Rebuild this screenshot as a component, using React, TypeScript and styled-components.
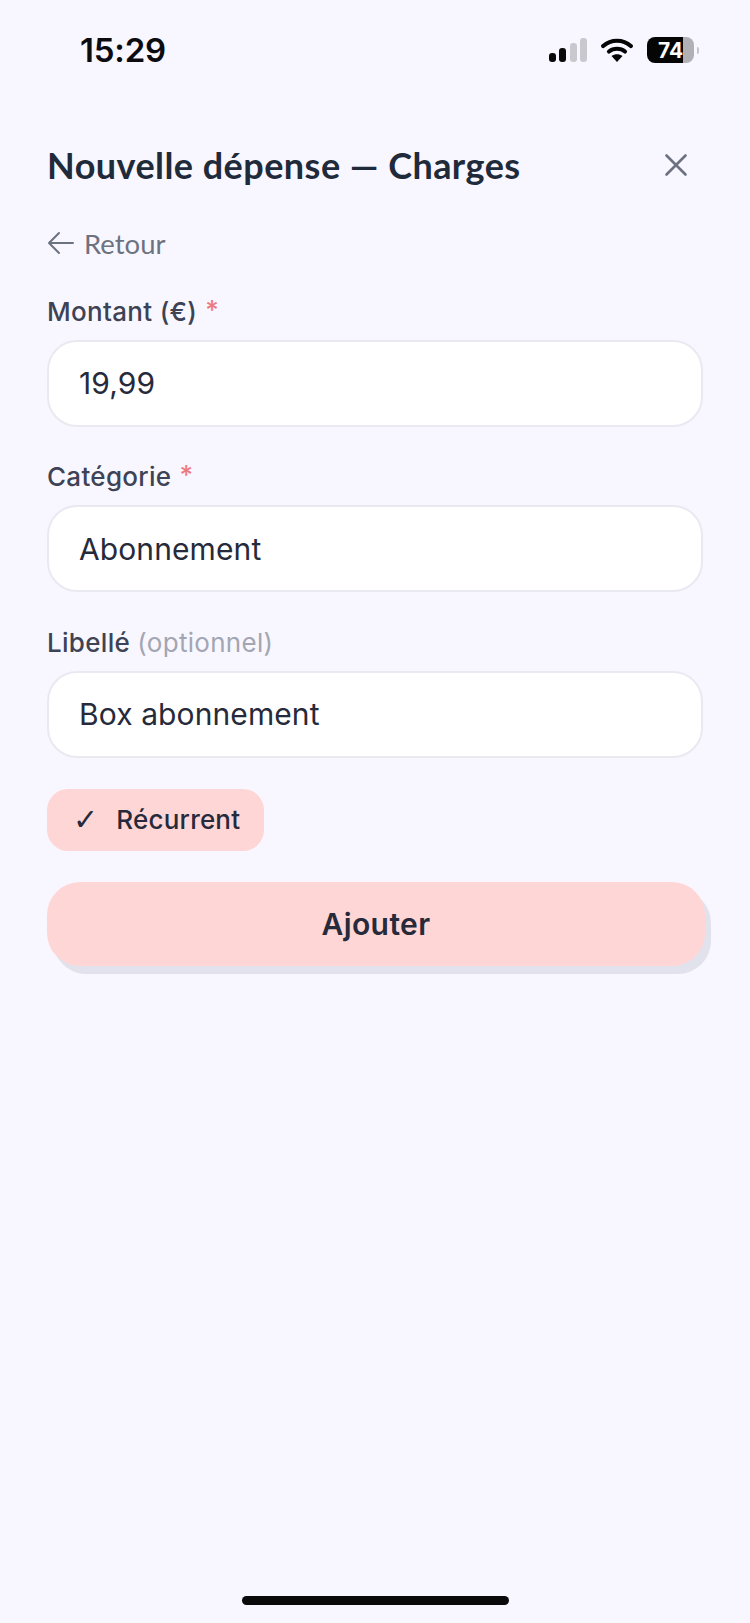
import React from 'react';
import styled, { createGlobalStyle } from 'styled-components';

const GlobalStyle = createGlobalStyle`
  html, body {
    margin: 0;
    padding: 0;
    background: #f8f7ff;
  }
  * {
    box-sizing: border-box;
  }
`;

const Page = styled.div`
  width: 750px;
  height: 1623px;
  display: flex;
  flex-direction: column;
  background: #f8f7ff;
  font-family: Inter, "Liberation Sans", sans-serif;
  color: #262a3a;
`;

const StatusBar = styled.div`
  height: 132px;
  padding: 30px 51px 0 80px;
  display: flex;
  align-items: flex-start;
  justify-content: space-between;
`;

const Clock = styled.div`
  font-size: 33px;
  line-height: 40px;
  font-weight: 600;
  color: #0c0c10;
  letter-spacing: -0.2px;
`;

const StatusIcons = styled.div`
  display: flex;
  align-items: center;
  gap: 14px;
  height: 40px;
`;

const Battery = styled.div`
  width: 47px;
  height: 26px;
  border-radius: 8px;
  display: flex;
  align-items: center;
  justify-content: center;
  color: #ffffff;
  font-size: 21px;
  font-weight: 700;
  background: linear-gradient(90deg, #050505 76%, #b0b0b6 76%);
`;

const BatteryCap = styled.div`
  width: 2px;
  height: 7px;
  margin-left: -11px;
  border-radius: 0 2px 2px 0;
  background: #c4c4ca;
`;

const Content = styled.div`
  padding: 0 47px;
  display: flex;
  flex-direction: column;
  flex: 1;
`;

const Header = styled.div`
  height: 66px;
  display: flex;
  align-items: center;
  justify-content: space-between;
  padding-right: 12px;
`;

const Title = styled.h1`
  margin: 0;
  font-family: Lato, sans-serif;
  font-size: 36px;
  font-weight: 700;
  letter-spacing: 0.45px;
  color: #1f2a3a;
`;

const CloseButton = styled.div`
  display: flex;
  color: #6b7180;
`;

const BackLink = styled.div`
  margin-top: 27px;
  height: 36px;
  display: flex;
  align-items: center;
  gap: 10px;
  font-family: Lato, sans-serif;
  font-size: 27.5px;
  color: #6d7280;
`;

const Field = styled.div`
  display: flex;
  flex-direction: column;
`;

const Label = styled.label`
  height: 36px;
  margin-top: 32px;
  display: flex;
  align-items: center;
  gap: 8px;
  font-size: 26px;
  font-weight: 500;
  letter-spacing: 0.3px;
  color: #3d4354;
`;

const Required = styled.span`
  color: #ee7a80;
  margin-top: -4px;
`;

const Hint = styled.span`
  color: #a3a6b2;
  font-weight: 400;
`;

const Input = styled.div`
  margin-top: 10.5px;
  height: 87px;
  border: 2px solid #e9e9f1;
  border-radius: 30px;
  background: #ffffff;
  padding: 0 30px;
  display: flex;
  align-items: center;
  font-size: 30px;
  letter-spacing: 0.1px;
  color: #262a3a;
`;

const Chip = styled.div`
  align-self: flex-start;
  margin-top: 31px;
  width: 217px;
  height: 62px;
  border-radius: 21px;
  background: #ffd6d6;
  padding-left: 26px;
  display: flex;
  align-items: center;
  gap: 18px;
  font-size: 26px;
  font-weight: 500;
  letter-spacing: 0.2px;
  color: #262a3a;
`;

const CheckMark = styled.span`
  font-family: "DejaVu Sans", sans-serif;
  font-size: 30px;
  font-weight: 700;
  line-height: 1;
`;

const Submit = styled.div`
  margin-top: 31px;
  height: 84px;
  width: 658px;
  border-radius: 33px;
  background: #ffd6d6;
  box-shadow: 6px 8px 0 #e2e2ec;
  display: flex;
  align-items: center;
  justify-content: center;
  font-size: 30px;
  font-weight: 600;
  letter-spacing: 0.4px;
  color: #262a3a;
`;

const HomeBar = styled.div`
  align-self: center;
  width: 267px;
  height: 9px;
  margin-bottom: 18px;
  border-radius: 5px;
  background: #0a0a0a;
`;

const fields = [
  { label: 'Montant (€)', required: true, value: '19,99' },
  { label: 'Catégorie', required: true, value: 'Abonnement' },
  { label: 'Libellé', hint: '(optionnel)', value: 'Box abonnement' },
];

const App = () => (
  <Page>
    <GlobalStyle />
    <StatusBar>
      <Clock>15:29</Clock>
      <StatusIcons>
        <svg width="38" height="24" viewBox="0 0 38 24">
          <rect x="0" y="15" width="7" height="9" rx="3" fill="#0a0a0a" />
          <rect x="10" y="10" width="7" height="14" rx="3" fill="#0a0a0a" />
          <rect x="21" y="5" width="7" height="19" rx="3" fill="#c8c8ce" />
          <rect x="31" y="0" width="7" height="24" rx="3" fill="#c8c8ce" />
        </svg>
        <svg width="32" height="24" viewBox="0 0 32 24">
          <path d="M2.2 8 C10 1 22 1 29.8 8" fill="none" stroke="#050505" strokeWidth="4.2" strokeLinecap="round" />
          <path d="M8 13.5 C12.5 9.8 19.5 9.8 24 13.5" fill="none" stroke="#050505" strokeWidth="4.2" strokeLinecap="round" />
          <path d="M10.5 18 L16 24 L21.5 18 C18 15.8 14 15.8 10.5 18 Z" fill="#050505" />
        </svg>
        <Battery>74</Battery>
        <BatteryCap />
      </StatusIcons>
    </StatusBar>
    <Content>
      <Header>
        <Title>Nouvelle dépense — Charges</Title>
        <CloseButton>
          <svg width="30" height="30" viewBox="0 0 30 30" fill="none" stroke="currentColor" strokeWidth="2.6" strokeLinecap="round">
            <path d="M5.5 5.5 L24.5 24.5 M24.5 5.5 L5.5 24.5" />
          </svg>
        </CloseButton>
      </Header>
      <BackLink>
        <svg width="27" height="24" viewBox="0 0 27 24" fill="none" stroke="currentColor" strokeWidth="2" strokeLinecap="round" strokeLinejoin="round">
          <path d="M26 12 H2 M12 2 L2 12 L12 22" />
        </svg>
        Retour
      </BackLink>
      {fields.map((f) => (
        <Field key={f.label}>
          <Label>
            <span>
              {f.label} {f.hint && <Hint>{f.hint}</Hint>}
            </span>
            {f.required && <Required>*</Required>}
          </Label>
          <Input>{f.value}</Input>
        </Field>
      ))}
      <Chip>
        <CheckMark>✓</CheckMark>
        Récurrent
      </Chip>
      <Submit>Ajouter</Submit>
    </Content>
    <HomeBar />
  </Page>
);

export default App;
